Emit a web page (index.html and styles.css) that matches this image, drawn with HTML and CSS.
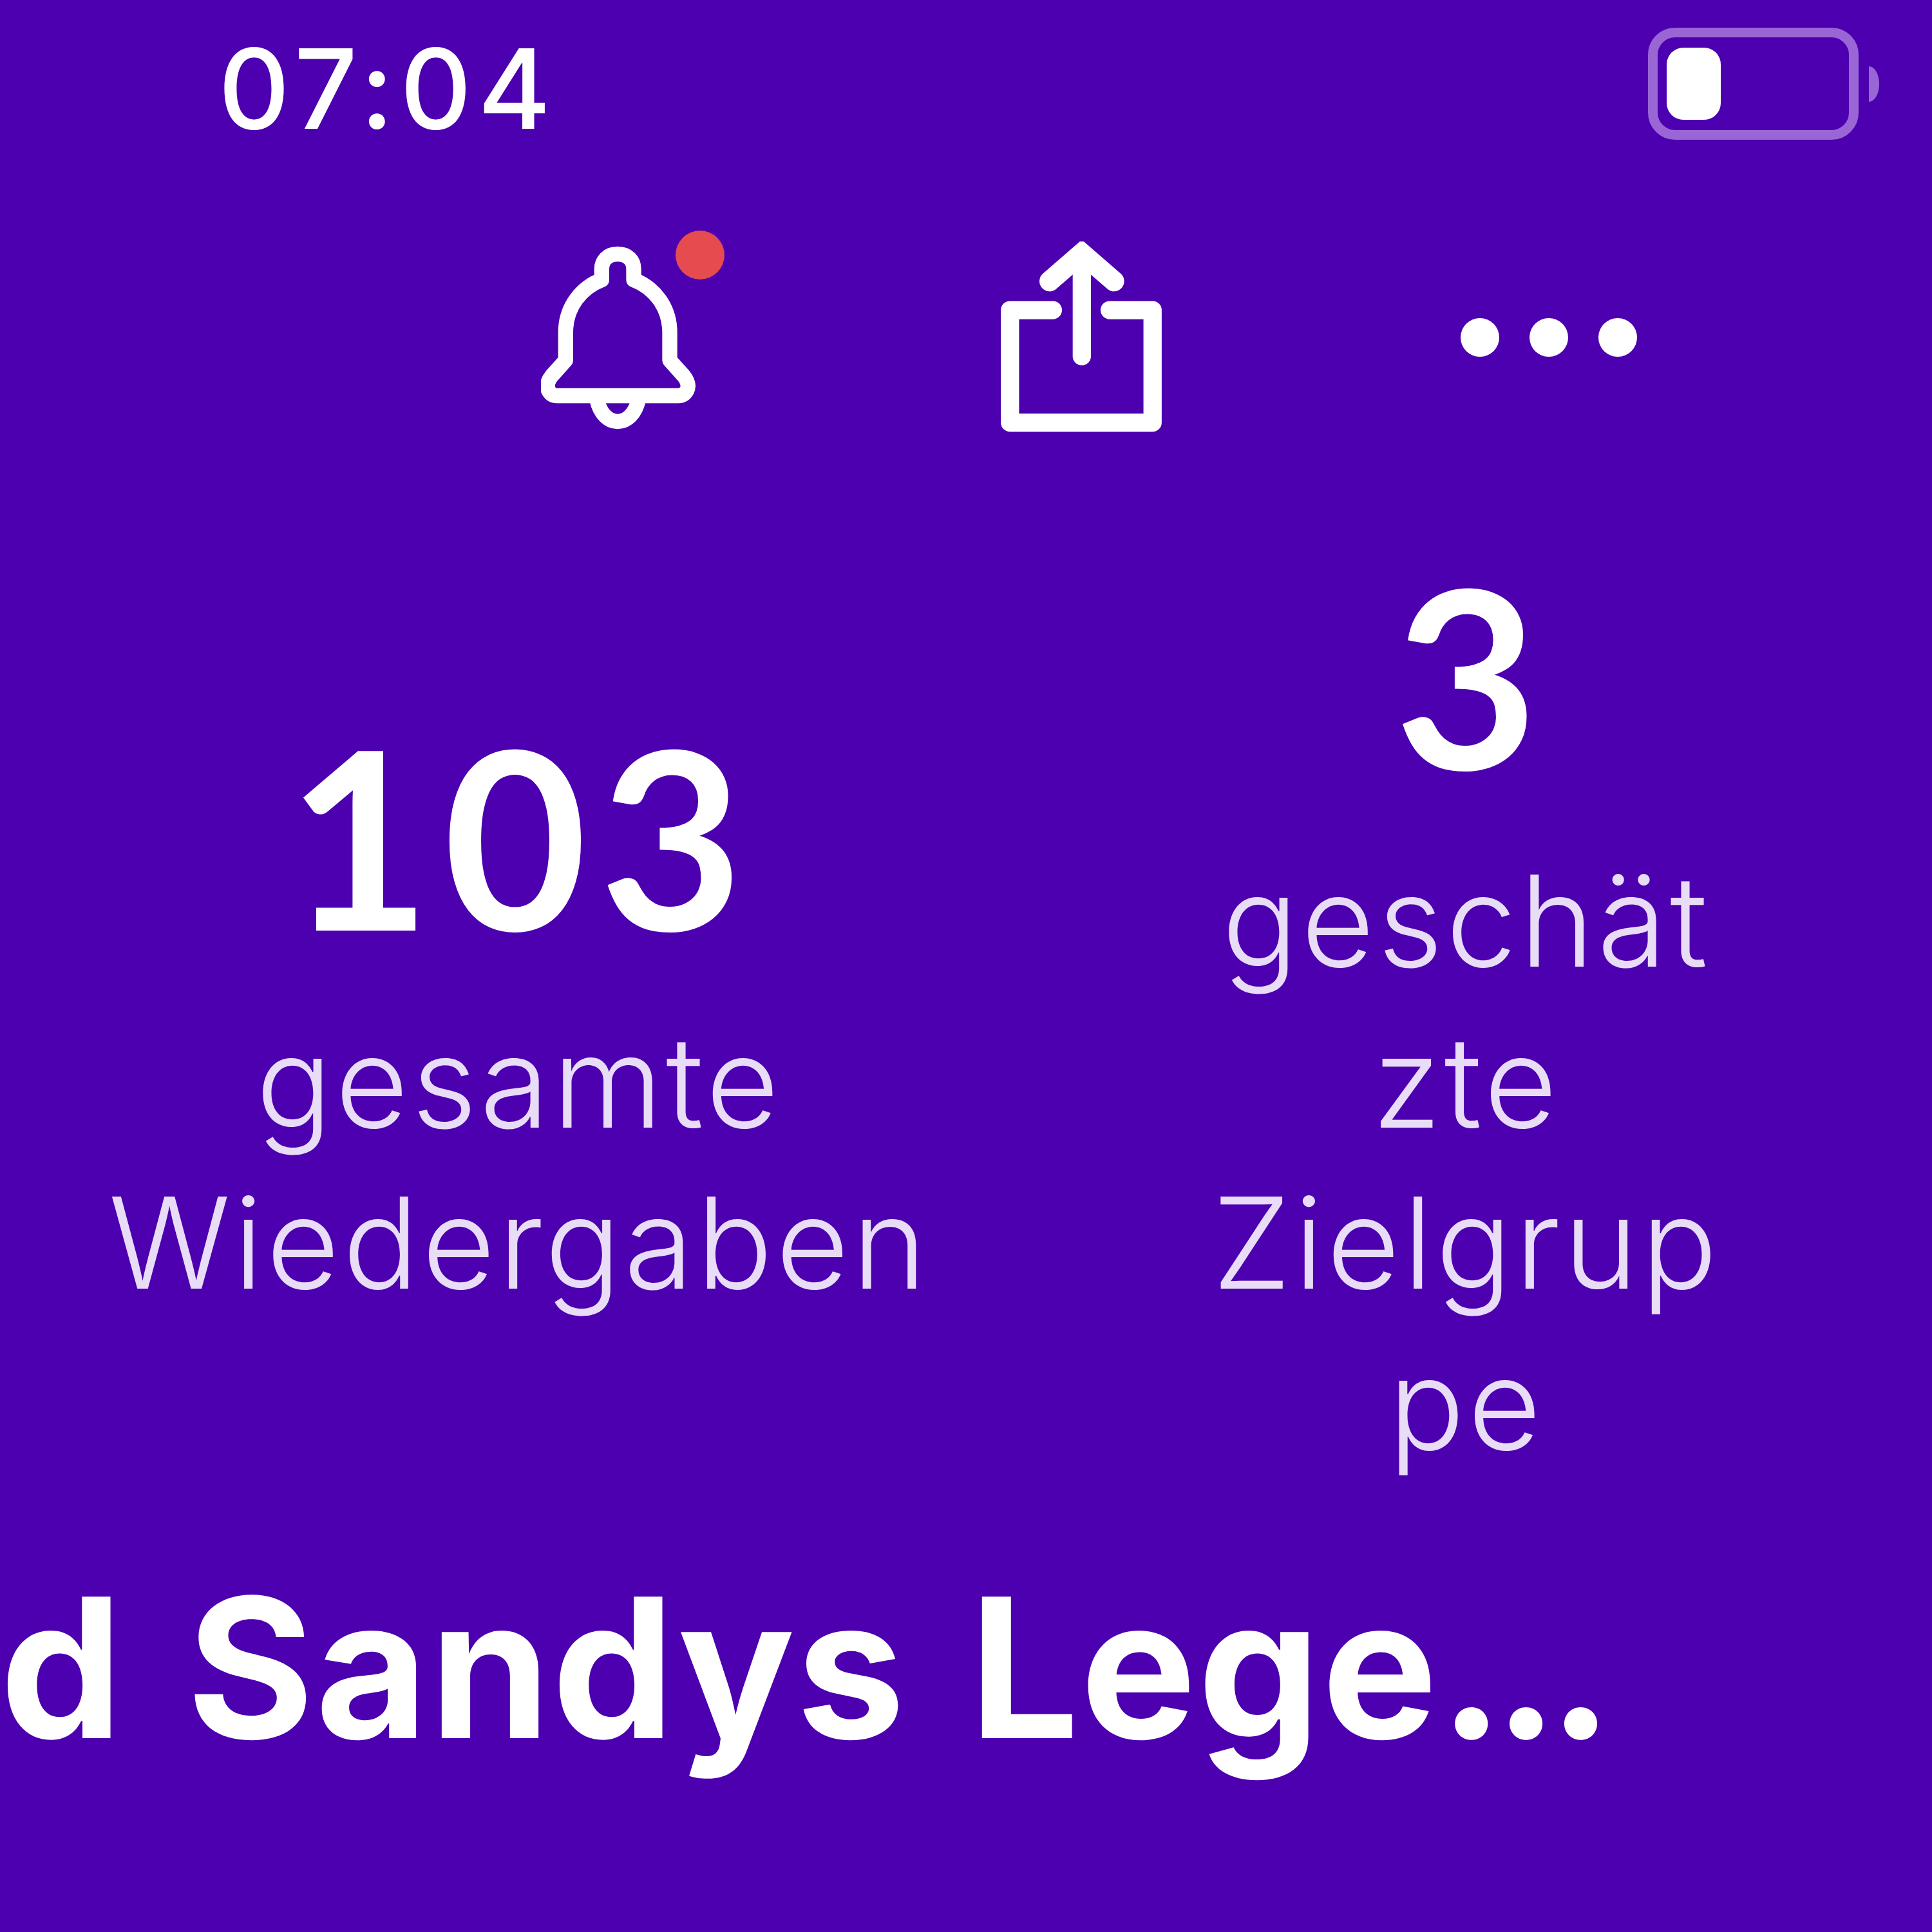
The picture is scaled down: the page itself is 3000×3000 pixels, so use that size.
FILE: index.html
```html
<!DOCTYPE html>
<html lang="en">
<head>
    <meta charset="UTF-8">
    <title>Statistik</title>
    <link rel="stylesheet" href="styles.css">
</head>
<body>
    <div class="status">
        <span class="time">07:04</span>
        <div class="battery">
            <div class="battery-body"><div class="battery-fill"></div></div>
            <div class="battery-tip"></div>
        </div>
    </div>
    <div class="actions">
        <div class="bell">
            <svg class="bell-icon" viewBox="180 185 720 860" fill="none" stroke="#fff" stroke-width="70" stroke-linejoin="round">
                <path d="M537 225C490 225 463 255 463 295V345C370 380 295 470 295 590V720L232 790Q200 830 215 860Q228 885 255 885H820Q847 885 860 860Q875 830 843 790L780 720V590C780 470 705 380 612 345V295C612 255 585 225 537 225Z"/>
                <path d="M440 900C455 970 495 1005 537 1005C580 1005 620 970 635 900"/>
            </svg>
            <span class="bell-dot"></span>
        </div>
        <svg class="share" viewBox="160 105 755 895" fill="none" stroke="#fff" stroke-width="85" stroke-linecap="round" stroke-linejoin="round">
            <path d="M405 425H205V950H870V425H670"/>
            <path d="M540 640V170"/>
            <path d="M390 290L540 160L690 290" stroke-width="95" stroke-linejoin="miter"/>
        </svg>
        <div class="more"><span></span><span></span><span></span></div>
    </div>
    <div class="stats">
        <div class="stat">
            <div class="num">103</div>
            <div class="label label-wide">gesamte<br>Wiedergaben</div>
        </div>
        <div class="stat stat-wrap">
            <div class="num">3</div>
            <div class="label">geschät<br>zte<br>Zielgrup<br>pe</div>
        </div>
    </div>
    <div class="title">d Sandys Lege<span class="dots">...</span></div>
</body>
</html>
```

FILE: styles.css
```css
html, body {
    margin: 0;
    height: 3000px;
    overflow: hidden;
}
body {
    width: 3000px;
    background-color: #4c00b0;
    color: #fff;
    font-family: Inter, sans-serif;
}
.status {
    display: flex;
    justify-content: space-between;
    align-items: center;
    height: 260px;
    padding: 0 82px 0 339px;
    box-sizing: border-box;
}
.time {
    font-size: 172px;
    font-weight: 500;
    line-height: 1;
    letter-spacing: 10px;
    margin-top: 14px;
}
.battery {
    display: flex;
    align-items: center;
    gap: 16px;
}
.battery-body {
    width: 327px;
    height: 174px;
    box-sizing: border-box;
    border: 15px solid #9a66d5;
    border-radius: 42px;
    padding: 16px 14px;
}
.battery-fill {
    width: 84px;
    height: 100%;
    background-color: #fff;
    border-radius: 26px;
}
.battery-tip {
    width: 16px;
    height: 55px;
    background-color: #9a66d5;
    border-radius: 0 100% 100% 0 / 0 50% 50% 0;
}
.actions {
    display: flex;
    align-items: center;
    height: 320px;
    margin-top: 104px;
    padding-left: 840px;
}
.bell {
    position: relative;
    width: 240px;
    height: 287px;
    margin-right: 473px;
}
.bell-icon {
    display: block;
    width: 240px;
    height: 287px;
}
.bell-dot {
    position: absolute;
    left: 209px;
    top: -23px;
    width: 76px;
    height: 76px;
    border-radius: 50%;
    background-color: #e64b4f;
}
.share {
    width: 252px;
    height: 298px;
    margin-right: 463px;
}
.more {
    display: flex;
    gap: 47px;
}
.more span {
    width: 60px;
    height: 60px;
    border-radius: 50%;
    background-color: #fff;
}
.stats {
    display: flex;
    align-items: center;
    height: 1762px;
    padding-left: 150px;
}
.stat {
    width: 1300px;
    text-align: center;
}
.stat-wrap {
    width: 820px;
    margin-left: 417px;
}
.num {
    font-family: Lato, sans-serif;
    font-size: 385px;
    font-weight: 700;
    line-height: 1.15;
    letter-spacing: 0.05em;
    text-indent: 0.05em;
    margin-bottom: 38px;
}
.label {
    font-size: 196px;
    font-weight: 300;
    line-height: 250px;
    letter-spacing: 5px;
    color: #e8dcf7;
}
.label-wide {
    padding-left: 12px;
}
.title {
    white-space: nowrap;
    margin-top: -8px;
    font-size: 302px;
    font-weight: 700;
    line-height: 1;
    letter-spacing: 2px;
    word-spacing: 24px;
}
.dots {
    letter-spacing: -16px;
}
```
